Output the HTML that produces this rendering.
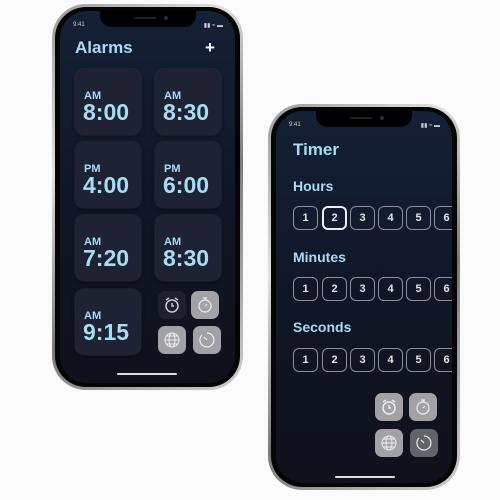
<!DOCTYPE html>
<html><head><style>
*{margin:0;padding:0;box-sizing:border-box}
body{width:500px;height:500px;background:#fbfbfb;position:relative;overflow:hidden;font-family:"Liberation Sans",sans-serif}
.ph{position:absolute;border-radius:34px;background:linear-gradient(135deg,#9a9a9a,#e0e0e0 30%,#7a7a7a 60%,#d0d0d0);}
.ph:after{content:"";position:absolute;left:3px;top:3px;right:3px;bottom:3px;border-radius:31px;background:#050505}
.scr{position:absolute;border-radius:27px;background:linear-gradient(180deg,#142036,#101626 50%,#0f111c);overflow:hidden}
.notch{position:absolute;left:50%;transform:translateX(-50%);top:0;width:96px;height:16px;background:#000;border-radius:0 0 12px 12px}
.notch:after{content:"";position:absolute;left:64px;top:5px;width:4px;height:4px;border-radius:50%;background:#1a2a55}
.notch:before{content:"";position:absolute;left:34px;top:6px;width:22px;height:2px;border-radius:2px;background:#222}
.st{position:absolute;top:11px;font-size:6px;color:#ccc}
.t{position:absolute;color:#a7dcf4;font-weight:bold}
.card{position:absolute;width:66px;height:66px;border-radius:9px;background:#1e2232;box-shadow:0 0 0 1px rgba(255,255,255,.05),0 2px 4px rgba(0,0,0,.4)}
.card b{position:absolute;left:9px;top:21px;font-size:11px;color:#a7dcf4}
.card i{position:absolute;left:8px;top:30px;font-size:23px;font-style:normal;font-weight:bold;color:#a7dcf4}
.ib{position:absolute;width:28px;height:28px;border-radius:7px;background:#a2a2a6}
.ib svg{position:absolute;left:4px;top:4px}
.n{position:absolute;width:25px;height:24px;border:1px solid #8a8f9a;border-radius:6px;color:#e6e6e6;font-size:11px;font-weight:bold;text-align:center;line-height:22px}
.hb{position:absolute;height:2px;background:#ddd;border-radius:2px}
</style></head><body>
<div class="ph" style="left:52px;top:4px;width:191px;height:386px"></div>
<div class="scr" style="left:60px;top:11px;width:175px;height:372px">
<div class="notch"></div>
<div class="st" style="left:13px">9:41</div><div class="st" style="right:12px">▮▮ ≈ ▬</div>
<div class="t" style="left:15px;top:27px;font-size:17px">Alarms</div>
<div class="t" style="left:145px;top:27px;font-size:17px;color:#fff">+</div>
<div class="card" style="left:15px;top:58px"><b>AM</b><i>8:00</i></div>
<div class="card" style="left:95px;top:58px"><b>AM</b><i>8:30</i></div>
<div class="card" style="left:15px;top:131px"><b>PM</b><i>4:00</i></div>
<div class="card" style="left:95px;top:131px"><b>PM</b><i>6:00</i></div>
<div class="card" style="left:15px;top:204px"><b>AM</b><i>7:20</i></div>
<div class="card" style="left:95px;top:204px"><b>AM</b><i>8:30</i></div>
<div class="card" style="left:15px;top:278px"><b>AM</b><i>9:15</i></div>
<div class="ib" style="left:98px;top:280px;background:#1c2030"><svg width="20" height="20" viewBox="0 0 20 20" fill="none" stroke="#ccc" stroke-width="1.5"><circle cx="10" cy="11" r="6"/><path d="M10 8v3h2M4 5l3-2M16 5l-3-2"/></svg></div>
<div class="ib" style="left:131px;top:280px"><svg width="20" height="20" viewBox="0 0 20 20" fill="none" stroke="#eee" stroke-width="1.2"><circle cx="10" cy="11" r="6"/><path d="M10 3v2M8 3h4M10 11l2-2"/></svg></div>
<div class="ib" style="left:98px;top:315px"><svg width="20" height="20" viewBox="0 0 20 20" fill="none" stroke="#eee" stroke-width="1"><circle cx="10" cy="10" r="7"/><ellipse cx="10" cy="10" rx="3" ry="7"/><path d="M3 10h14M4 6h12M4 14h12"/></svg></div>
<div class="ib" style="left:133px;top:315px"><svg width="20" height="20" viewBox="0 0 20 20" fill="none" stroke="#eee" stroke-width="1.2"><path d="M10 3a7 7 0 1 1-5 2"/><path d="M10 10l-3-3"/></svg></div>
<div class="hb" style="left:57px;top:362px;width:60px"></div>
</div>

<div class="ph" style="left:268px;top:104px;width:192px;height:386px"></div>
<div class="scr" style="left:276px;top:111px;width:176px;height:372px">
<div class="notch"></div>
<div class="st" style="left:13px">9:41</div><div class="st" style="right:12px">▮▮ ≈ ▬</div>
<div class="t" style="left:17px;top:29px;font-size:17px">Timer</div>
<div class="t" style="left:17px;top:67px;font-size:14px">Hours</div>
<div class="t" style="left:17px;top:138px;font-size:14px">Minutes</div>
<div class="t" style="left:17px;top:208px;font-size:14px">Seconds</div>
<div class="n" style="left:17px;top:95px">1</div><div class="n" style="left:46px;top:95px;border:2px solid #eee;line-height:20px">2</div><div class="n" style="left:74px;top:95px">3</div><div class="n" style="left:102px;top:95px">4</div><div class="n" style="left:130px;top:95px">5</div><div class="n" style="left:158px;top:95px">6</div>
<div class="n" style="left:17px;top:166px">1</div><div class="n" style="left:46px;top:166px">2</div><div class="n" style="left:74px;top:166px">3</div><div class="n" style="left:102px;top:166px">4</div><div class="n" style="left:130px;top:166px">5</div><div class="n" style="left:158px;top:166px">6</div>
<div class="n" style="left:17px;top:237px">1</div><div class="n" style="left:46px;top:237px">2</div><div class="n" style="left:74px;top:237px">3</div><div class="n" style="left:102px;top:237px">4</div><div class="n" style="left:130px;top:237px">5</div><div class="n" style="left:158px;top:237px">6</div>
<div class="ib" style="left:99px;top:282px"><svg width="20" height="20" viewBox="0 0 20 20" fill="none" stroke="#eee" stroke-width="1.5"><circle cx="10" cy="11" r="6"/><path d="M10 8v3h2M4 5l3-2M16 5l-3-2"/></svg></div>
<div class="ib" style="left:133px;top:282px"><svg width="20" height="20" viewBox="0 0 20 20" fill="none" stroke="#eee" stroke-width="1.2"><circle cx="10" cy="11" r="6"/><path d="M10 3v2M8 3h4M10 11l2-2"/></svg></div>
<div class="ib" style="left:99px;top:318px"><svg width="20" height="20" viewBox="0 0 20 20" fill="none" stroke="#eee" stroke-width="1"><circle cx="10" cy="10" r="7"/><ellipse cx="10" cy="10" rx="3" ry="7"/><path d="M3 10h14M4 6h12M4 14h12"/></svg></div>
<div class="ib" style="left:134px;top:318px;background:#62646c"><svg width="20" height="20" viewBox="0 0 20 20" fill="none" stroke="#eee" stroke-width="1.2"><path d="M10 3a7 7 0 1 1-5 2"/><path d="M10 10l-3-3"/></svg></div>
<div class="hb" style="left:59px;top:365px;width:60px"></div>
</div>
</body></html>
